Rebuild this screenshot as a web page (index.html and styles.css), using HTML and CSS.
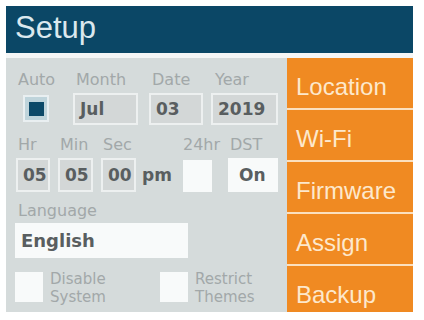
FILE: index.html
```html
<!DOCTYPE html>
<html>
<head>
<meta charset="utf-8">
<link rel="stylesheet" href="styles.css">
</head>
<body>
<div class="frame">
  <div class="header">Setup</div>
  <div class="main">
    <div class="panel">
      <div class="row row1">
        <div class="field f-auto">
          <div class="label">Auto</div>
          <div class="check-auto"><span class="check-mark"></span></div>
        </div>
        <div class="field f-month">
          <div class="label">Month</div>
          <div class="box box1">Jul</div>
        </div>
        <div class="field f-date">
          <div class="label">Date</div>
          <div class="box box1">03</div>
        </div>
        <div class="field f-year">
          <div class="label">Year</div>
          <div class="box box1">2019</div>
        </div>
      </div>
      <div class="row row2">
        <div class="field f-hr">
          <div class="label">Hr</div>
          <div class="box box2">05</div>
        </div>
        <div class="field f-min">
          <div class="label">Min</div>
          <div class="box box2">05</div>
        </div>
        <div class="field f-sec">
          <div class="label">Sec</div>
          <div class="box box2">00</div>
        </div>
        <div class="field f-pm">
          <div class="label">&nbsp;</div>
          <div class="pm">pm</div>
        </div>
        <div class="field f-24">
          <div class="label">24hr</div>
          <div class="white-check check24"></div>
        </div>
        <div class="field f-dst">
          <div class="label">DST</div>
          <div class="box box2 white">On</div>
        </div>
      </div>
      <div class="row row3">
        <div class="field f-lang">
          <div class="label lang-label">Language</div>
          <div class="box box3 white">English</div>
        </div>
      </div>
      <div class="row row4">
        <div class="opt opt1">
          <div class="white-check check-opt"></div>
          <div class="opt-text">Disable<br>System</div>
        </div>
        <div class="opt opt2">
          <div class="white-check check-opt"></div>
          <div class="opt-text">Restrict<br>Themes</div>
        </div>
      </div>
    </div>
    <div class="menu">
      <div class="btn">Location</div>
      <div class="btn">Wi-Fi</div>
      <div class="btn">Firmware</div>
      <div class="btn">Assign</div>
      <div class="btn">Backup</div>
    </div>
  </div>
</div>
</body>
</html>
```

FILE: styles.css
```css
html, body {
  margin: 0;
  padding: 0;
  background: #ffffff;
}

.frame {
  margin: 6px 0 0 6px;
  width: 407px;
  height: 306px;
  display: flex;
  flex-direction: column;
  background: #f4f6f6;
}

.header {
  height: 47px;
  flex: none;
  background: #0b4766;
  color: #dbe8ee;
  font-family: "Liberation Sans", Arial, sans-serif;
  font-size: 31px;
  line-height: 43px;
  padding-left: 9px;
  box-sizing: border-box;
}

.main {
  margin-top: 5px;
  height: 254px;
  display: flex;
  overflow: hidden;
}

.panel {
  width: 281px;
  flex: none;
  background: #d5dbdb;
  padding-top: 13px;
  box-sizing: border-box;
  font-family: "DejaVu Sans", sans-serif;
}

.row {
  display: flex;
  align-items: flex-start;
}

.field {
  display: flex;
  flex-direction: column;
  flex: none;
}

.label {
  font-size: 16px;
  line-height: 18px;
  height: 18px;
  color: #a2a8a9;
  margin-bottom: 4px;
  white-space: nowrap;
}

.box {
  box-sizing: border-box;
  border: 2px solid #edf0f0;
  background: #d3d7d7;
  color: #595e60;
  font-weight: bold;
  font-size: 17px;
  display: flex;
  align-items: center;
  padding-left: 5px;
}

.box.white {
  background: #f8fafa;
  border-color: #f8fafa;
}

.box1 { height: 32px; }
.box2 { height: 34px; }

/* row 1 */
.f-auto { margin-left: 12px; width: 55px; }
.f-month { width: 65px; }
.f-month .label { padding-left: 3px; }
.f-date { margin-left: 11px; width: 54px; }
.f-date .label { padding-left: 3px; }
.f-year { margin-left: 8px; width: 67px; }
.f-year .label { padding-left: 4px; }

.check-auto {
  margin-left: 5px;
  margin-top: 2px;
  width: 26px;
  height: 27px;
  box-sizing: border-box;
  border: 2px solid #e9eff1;
  background: #bfd4db;
  display: flex;
  align-items: center;
  justify-content: center;
}

.check-mark {
  width: 15px;
  height: 14px;
  background: #0c4968;
}

/* row 2 */
.row2 { margin-top: 11px; }
.f-hr { margin-left: 10px; width: 34px; }
.f-hr .label { padding-left: 2px; }
.f-min { margin-left: 8px; width: 35px; }
.f-min .label { padding-left: 2px; }
.f-sec { margin-left: 8px; width: 35px; }
.f-sec .label { padding-left: 2px; }
.f-pm { margin-left: 6px; width: 31px; }
.f-24 { margin-left: 10px; width: 29px; }
.f-dst { margin-left: 16px; width: 50px; }
.f-dst .label { padding-left: 2px; }

.f-dst .box { padding-left: 9px; }

.pm {
  height: 34px;
  display: flex;
  align-items: center;
  font-weight: bold;
  font-size: 17px;
  color: #595e60;
}

.white-check {
  background: #f8fafa;
}

.check24 {
  width: 29px;
  height: 32px;
  margin-top: 2px;
}

/* row 3 */
.row3 { margin-top: 10px; }
.f-lang { margin-left: 9px; }
.lang-label { padding-left: 3px; margin-bottom: 3px; }
.box3 {
  width: 173px;
  height: 35px;
  font-size: 18px;
  padding-left: 4px;
}

/* row 4 */
.row4 { margin-top: 14px; }
.opt {
  display: flex;
  align-items: flex-start;
}
.opt1 { margin-left: 9px; width: 145px; }
.check-opt {
  width: 28px;
  height: 30px;
  flex: none;
}
.opt-text {
  margin-left: 7px;
  margin-top: -2px;
  font-size: 15px;
  line-height: 18px;
  color: #a2a8a9;
}

/* menu */
.menu {
  width: 126px;
  flex: none;
  display: flex;
  flex-direction: column;
  gap: 2px;
  background: #fbe0bf;
}

.btn {
  height: 50px;
  flex: none;
  box-sizing: border-box;
  background: #f08a22;
  color: #fde8cc;
  font-family: "Liberation Sans", Arial, sans-serif;
  font-size: 24px;
  line-height: 43px;
  padding-top: 7px;
  padding-left: 9px;
  white-space: nowrap;
}
```
